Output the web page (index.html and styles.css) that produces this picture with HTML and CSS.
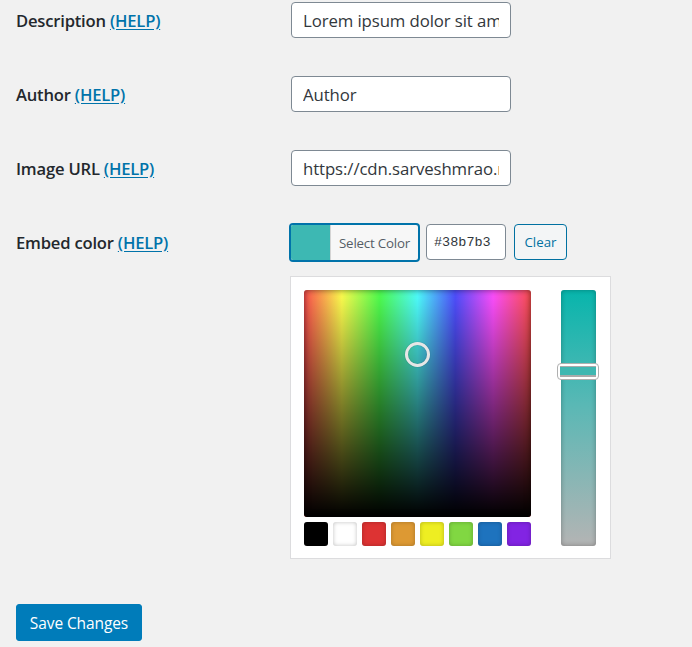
FILE: index.html
```html
<!DOCTYPE html>
<html>
<head>
<meta charset="utf-8">
<link rel="stylesheet" href="styles.css">
</head>
<body>
<div class="form">
  <div class="row">
    <div class="label">Description <a href="#">(HELP)</a></div>
    <div class="field"><input class="text" type="text" value="Lorem ipsum dolor sit amet"></div>
  </div>
  <div class="row">
    <div class="label">Author <a href="#">(HELP)</a></div>
    <div class="field"><input class="text" type="text" value="Author"></div>
  </div>
  <div class="row">
    <div class="label">Image URL <a href="#">(HELP)</a></div>
    <div class="field"><input class="text" type="text" value="https://cdn.sarveshmrao.net/image.png"></div>
  </div>
  <div class="row">
    <div class="label">Embed color <a href="#">(HELP)</a></div>
    <div class="field">
      <div class="color-controls">
        <button class="color-result"><span class="swatch-chip"></span><span class="color-text">Select Color</span></button>
        <input class="hex" type="text" value="#38b7b3">
        <button class="clear">Clear</button>
      </div>
      <div class="picker">
        <div class="picker-main">
          <div class="square">
            <div class="square-value"></div>
            <div class="circle"></div>
          </div>
          <div class="palette">
            <span class="pal" style="background:#000000"></span>
            <span class="pal" style="background:#ffffff"></span>
            <span class="pal" style="background:#dd3333"></span>
            <span class="pal" style="background:#dd9933"></span>
            <span class="pal" style="background:#eeee22"></span>
            <span class="pal" style="background:#81d742"></span>
            <span class="pal" style="background:#1e73be"></span>
            <span class="pal" style="background:#8224e3"></span>
          </div>
        </div>
        <div class="strip">
          <div class="handle"><div class="handle-inner"></div></div>
        </div>
      </div>
    </div>
  </div>
</div>
<button class="save">Save Changes</button>
</body>
</html>
```
FILE: styles.css
```css
html, body {
  margin: 0;
  padding: 0;
  background: #f1f1f1;
}
body {
  padding: 2px 0 0 16px;
  font-family: "Open Sans", "Noto Sans", sans-serif;
  color: #23282d;
}
.form {
  display: flex;
  flex-direction: column;
  gap: 38px;
}
.row {
  display: flex;
  align-items: flex-start;
}
.label {
  width: 275px;
  height: 36px;
  flex: none;
  padding-top: 1px;
  box-sizing: border-box;
  font-size: 16.6px;
  font-weight: 600;
  line-height: 36px;
  letter-spacing: -0.2px;
}
.label a {
  color: #0073aa;
  font-weight: 600;
  text-decoration: underline;
  text-underline-offset: 2px;
}
.field {
  display: flex;
  flex-direction: column;
}
.text {
  box-sizing: border-box;
  width: 220px;
  height: 36px;
  margin: 0;
  padding: 0 11px;
  border: 1px solid #7e8993;
  border-radius: 4px;
  background: #fff;
  color: #32373c;
  font-family: "Open Sans", "Noto Sans", sans-serif;
  font-size: 16.8px;
  letter-spacing: -0.1px;
  outline: none;
}
.color-controls {
  display: flex;
  align-items: flex-start;
  height: 36px;
}
.color-result {
  box-sizing: border-box;
  height: 39px;
  width: 131px;
  margin: -1px 0 -2px -2px;
  padding: 0;
  display: flex;
  align-items: stretch;
  border: 2px solid #0073aa;
  border-radius: 4px;
  background: #f7f7f7;
  overflow: hidden;
  cursor: pointer;
}
.swatch-chip {
  width: 39px;
  background: #3db8b3;
  border-right: 1px solid #d4d4d4;
}
.color-text {
  flex: 1;
  display: flex;
  align-items: center;
  justify-content: center;
  padding-top: 1px;
  font-family: "Open Sans", "Noto Sans", sans-serif;
  font-size: 13.3px;
  color: #555d66;
  letter-spacing: -0.2px;
}
.hex {
  box-sizing: border-box;
  width: 80px;
  height: 36px;
  margin: 0 0 0 6px;
  padding: 0 7px;
  border: 1px solid #7e8993;
  border-radius: 4px;
  background: #fff;
  color: #32373c;
  font-family: "Liberation Mono", "DejaVu Sans Mono", monospace;
  font-size: 13.5px;
  outline: none;
}
.clear {
  box-sizing: border-box;
  width: 53px;
  height: 36px;
  margin: 0 0 0 8px;
  padding: 0;
  border: 1px solid #0071a1;
  border-radius: 4px;
  background: #f3f5f6;
  color: #0071a1;
  font-family: "Open Sans", "Noto Sans", sans-serif;
  font-size: 13.3px;
}
.picker {
  box-sizing: border-box;
  width: 321px;
  margin: 16px 0 0 -1px;
  padding: 13px 14px 12px 13px;
  background: #fff;
  border: 1px solid #dcdcde;
  display: flex;
  gap: 30px;
}
.picker-main {
  display: flex;
  flex-direction: column;
  gap: 5px;
}
.square {
  position: relative;
  width: 227px;
  height: 227px;
  border-radius: 3px;
  overflow: hidden;
  background: linear-gradient(to right,
    #ff4f4f 0%, #ffff4f 16.67%, #4fff4f 33.33%, #4fffff 50%,
    #4f4fff 66.67%, #ff4fff 83.33%, #ff4f4f 100%);
}
.square-value {
  position: absolute;
  inset: 0;
  background: linear-gradient(to bottom, rgba(0,0,0,0) 0%, #000 100%);
  box-shadow: inset 0 0 6px rgba(0,0,0,0.55);
}
.circle {
  position: absolute;
  left: 101px;
  top: 52px;
  width: 25px;
  height: 25px;
  box-sizing: border-box;
  border: 3px solid #e6e6e6;
  border-radius: 50%;
  box-shadow: 0 0 1px rgba(0,0,0,0.4), inset 0 0 1px rgba(0,0,0,0.4);
}
.palette {
  display: flex;
  gap: 5px;
}
.pal {
  width: 24px;
  height: 24px;
  border-radius: 3px;
  box-shadow: inset 0 0 4px rgba(0,0,0,0.25);
}
.strip {
  position: relative;
  width: 35px;
  height: 256px;
  border-radius: 3px;
  background: linear-gradient(to bottom, #07b5ac 0%, #5ab8b5 45%, #b4b4b4 100%);
  box-shadow: inset 0 0 5px rgba(0,0,0,0.3);
}
.handle {
  position: absolute;
  left: -4px;
  top: 73px;
  box-sizing: border-box;
  width: 42px;
  height: 17px;
  padding: 2px;
  background: #fff;
  border: 1px solid #b0b0b0;
  border-radius: 4px;
}
.handle-inner {
  height: 100%;
  box-sizing: border-box;
  background: #3fb7b1;
  border-top: 1px solid #aaa;
  border-bottom: 2px solid #aaa;
}
.save {
  margin-top: 45px;
  box-sizing: border-box;
  width: 126px;
  height: 37px;
  padding: 0;
  border: 1px solid #007cba;
  border-radius: 3px;
  background: #007cba;
  color: #fff;
  font-family: "Open Sans", "Noto Sans", sans-serif;
  font-size: 15.5px;
  letter-spacing: -0.1px;
}
```
